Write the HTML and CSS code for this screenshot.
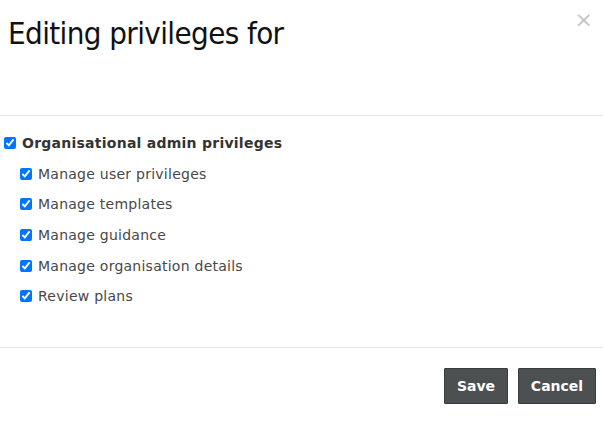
FILE: index.html
```html
<!DOCTYPE html>
<html>
<head>
<meta charset="utf-8">
<link rel="stylesheet" href="styles.css">
</head>
<body>
<div class="modal">
  <div class="modal-header">
    <h1 class="title">Editing privileges for</h1>
    <span class="close">&times;</span>
  </div>
  <div class="modal-body">
    <label class="row main"><input type="checkbox" checked><span>Organisational admin privileges</span></label>
    <label class="row sub"><input type="checkbox" checked><span>Manage user privileges</span></label>
    <label class="row sub"><input type="checkbox" checked><span>Manage templates</span></label>
    <label class="row sub"><input type="checkbox" checked><span>Manage guidance</span></label>
    <label class="row sub"><input type="checkbox" checked><span>Manage organisation details</span></label>
    <label class="row sub"><input type="checkbox" checked><span>Review plans</span></label>
  </div>
  <div class="modal-footer">
    <button class="btn save">Save</button>
    <button class="btn cancel">Cancel</button>
  </div>
</div>
</body>
</html>
```
FILE: styles.css
```css
html, body {
  margin: 0;
  padding: 0;
  background: #fff;
}
body {
  font-family: "DejaVu Sans", Verdana, sans-serif;
  color: #333;
}
.modal {
  width: 603px;
  height: 422px;
  display: flex;
  flex-direction: column;
}
.modal-header {
  position: relative;
  height: 115px;
  border-bottom: 1px solid #e6e6e6;
  padding: 0 8px;
  box-sizing: content-box;
}
.title {
  margin: 0;
  padding-top: 13px;
  font-family: "DejaVu Sans Condensed", "DejaVu Sans", sans-serif;
  font-weight: normal;
  font-size: 31px;
  letter-spacing: -0.6px;
  line-height: 40px;
  color: #111;
}
.close {
  position: absolute;
  right: 10px;
  top: 6px;
  font-size: 22px;
  line-height: 27px;
  color: #c4c4c4;
}
.modal-body {
  display: flex;
  flex-direction: column;
  padding: 12px 0 35px;
  border-bottom: 1px solid #e6e6e6;
}
.row {
  display: flex;
  align-items: center;
  height: 30.6px;
  font-size: 14px;
  letter-spacing: 0.25px;
}
.row input {
  width: 12px;
  height: 12px;
  margin: 0 6px 0 0;
}
.main {
  padding-left: 4px;
  font-weight: bold;
}
.sub {
  padding-left: 20px;
  color: #484848;
}
.modal-footer {
  display: flex;
  justify-content: flex-end;
  gap: 10px;
  padding: 20px 7px 0 0;
}
.btn {
  height: 36px;
  border: 1px solid #3a3d3d;
  background: #4c5050;
  color: #fff;
  font-family: "DejaVu Sans", sans-serif;
  font-weight: bold;
  font-size: 14px;
  padding: 0;
  border-radius: 1px;
}
.save { width: 64px; }
.cancel { width: 78px; }
```
